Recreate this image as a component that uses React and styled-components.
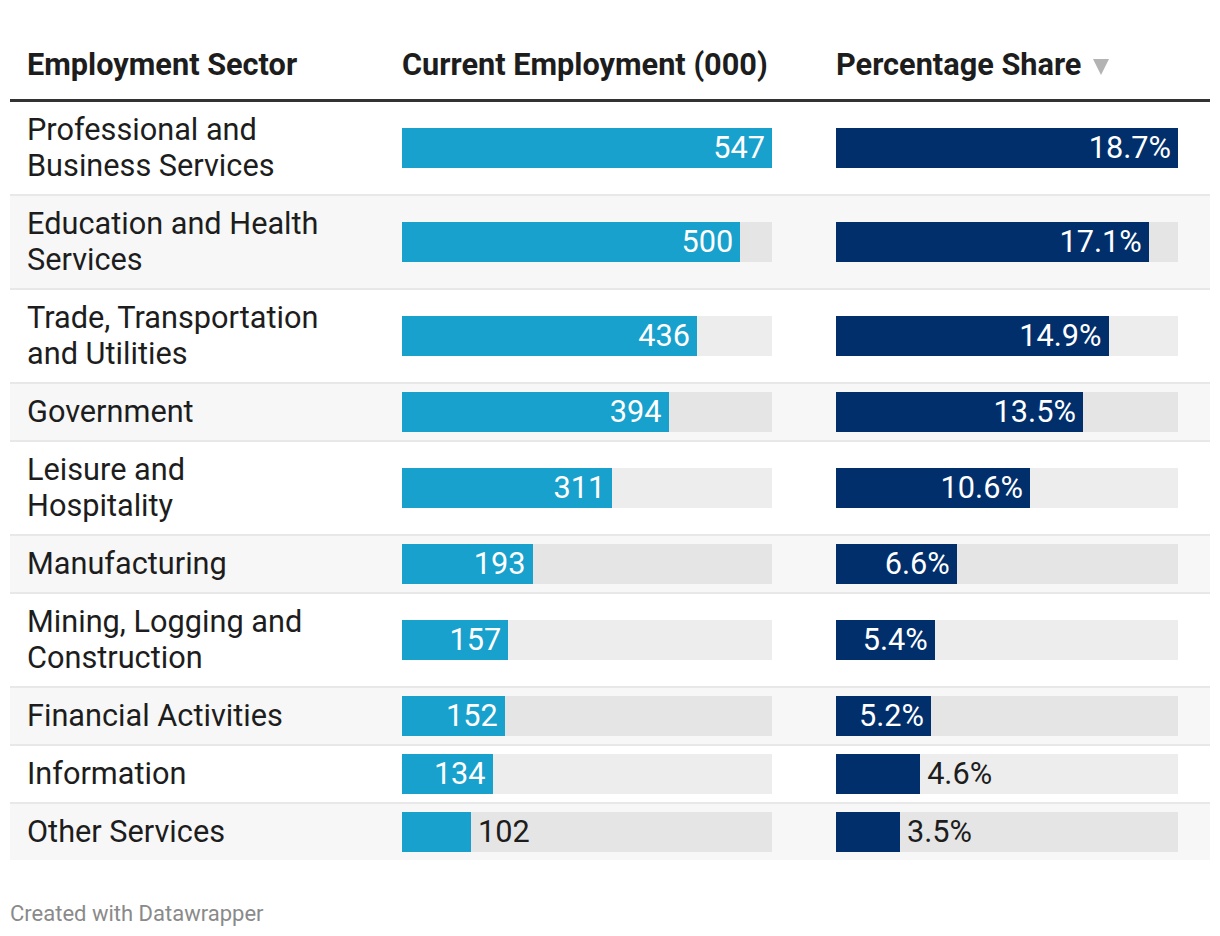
import React from 'react';
import styled, { createGlobalStyle } from 'styled-components';

const GlobalStyle = createGlobalStyle`
  body {
    margin: 0;
    background: #ffffff;
    font-family: Roboto, "Liberation Sans", sans-serif;
    color: #1d1d1d;
  }
`;

const rows = [
  { sector: 'Professional and Business Services', jobs: 547, share: 18.7 },
  { sector: 'Education and Health Services', jobs: 500, share: 17.1 },
  { sector: 'Trade, Transportation and Utilities', jobs: 436, share: 14.9 },
  { sector: 'Government', jobs: 394, share: 13.5 },
  { sector: 'Leisure and Hospitality', jobs: 311, share: 10.6 },
  { sector: 'Manufacturing', jobs: 193, share: 6.6 },
  { sector: 'Mining, Logging and Construction', jobs: 157, share: 5.4 },
  { sector: 'Financial Activities', jobs: 152, share: 5.2 },
  { sector: 'Information', jobs: 134, share: 4.6 },
  { sector: 'Other Services', jobs: 102, share: 3.5 },
];

const FONT = 30.7;
const COLS = '392px 434px 374px';

const Page = styled.div`
  padding: 45px 10px 0;
  width: 1200px;
`;

const HeaderRow = styled.div`
  display: grid;
  grid-template-columns: ${COLS};
  border-bottom: 3px solid #333333;
`;

const HeadCell = styled.div`
  padding: 0 0 14px ${(p) => (p.$first ? '17px' : '0')};
  font-size: ${FONT}px;
  line-height: 40px;
  font-weight: 700;
  color: #1d1d1d;
  display: flex;
  align-items: center;
  gap: 12px;
`;

const SortArrow = styled.span`
  width: 0;
  height: 0;
  border-left: 8.5px solid transparent;
  border-right: 8.5px solid transparent;
  border-top: 16px solid #b3b3b3;
  margin-top: 4px;
`;

const Row = styled.div`
  display: grid;
  grid-template-columns: ${COLS};
  align-items: center;
  padding: 8px 0;
  background: ${(p) => (p.$shade ? '#f7f7f7' : '#ffffff')};
  border-bottom: ${(p) => (p.$last ? 'none' : '2px solid #e8e8e8')};
`;

const Sector = styled.div`
  padding: 2px 75px 2px 17px;
  font-size: ${FONT}px;
  line-height: 36px;
  color: #1d1d1d;
`;

const Track = styled.div`
  width: ${(p) => p.$w}px;
  height: 40px;
  background: rgba(0, 0, 0, 0.07);
  display: flex;
  align-items: center;
`;

const Fill = styled.div`
  height: 100%;
  background: ${(p) => p.$color};
  display: flex;
  align-items: center;
  justify-content: flex-end;
  flex: none;
`;

const Value = styled.span`
  font-size: ${FONT}px;
  line-height: 40px;
  white-space: nowrap;
  color: ${(p) => (p.$inside ? '#ffffff' : '#1d1d1d')};
  padding: ${(p) => (p.$inside ? '0 7px 0 0' : '0 0 0 7px')};
`;

const Footer = styled.div`
  margin-top: 41px;
  font-size: 22px;
  color: #8a8a8a;
`;

function Bar({ value, max, width, color, label }) {
  const px = (value / max) * width;
  const textW = label.length * FONT * 0.54;
  const inside = px > textW + 26;
  return (
    <Track $w={width}>
      <Fill $color={color} style={{ width: `${px}px` }}>
        {inside && <Value $inside>{label}</Value>}
      </Fill>
      {!inside && <Value>{label}</Value>}
    </Track>
  );
}

export default function App() {
  return (
    <Page>
      <GlobalStyle />
      <HeaderRow>
        <HeadCell $first>Employment Sector</HeadCell>
        <HeadCell>Current Employment (000)</HeadCell>
        <HeadCell>
          Percentage Share <SortArrow />
        </HeadCell>
      </HeaderRow>
      {rows.map((r, i) => (
        <Row key={r.sector} $shade={i % 2 === 1} $last={i === rows.length - 1}>
          <Sector>{r.sector}</Sector>
          <Bar value={r.jobs} max={547} width={370} color="#18a1cd" label={String(r.jobs)} />
          <Bar value={r.share} max={18.7} width={342} color="#002f6c" label={`${r.share.toFixed(1)}%`} />
        </Row>
      ))}
      <Footer>Created with Datawrapper</Footer>
    </Page>
  );
}
